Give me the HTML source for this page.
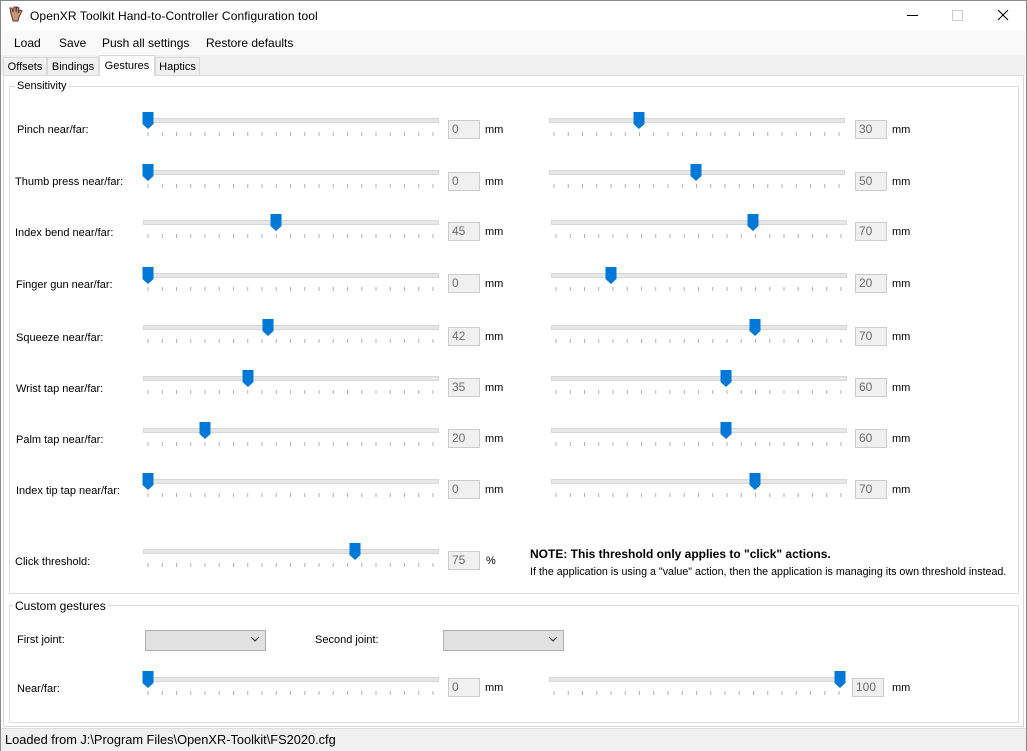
<!DOCTYPE html>
<html><head><meta charset="utf-8"><style>
body{margin:0;width:1027px;height:751px;overflow:hidden;background:#fff;font-family:"Liberation Sans",sans-serif;font-size:12px;color:#000;position:relative}
.a{position:absolute;white-space:nowrap}
.l{position:absolute;white-space:nowrap;font-size:11px;margin-top:2px}
.tb{position:absolute;width:27px;height:17px;border:1px solid #ccc;background:#f0f0f0;color:#6d6d6d;font-size:12px;line-height:17px;padding-left:3px;box-sizing:content-box}
.tab{position:absolute;top:57px;height:18px;border:1px solid #d9d9d9;border-bottom:none;background:#f0f0f0;font-size:11px;line-height:18px;text-align:center;box-sizing:border-box}
.grp{position:absolute;border:1px solid #dcdcdc}
.dd{position:absolute;width:119px;height:19px;border:1px solid #adadad;background:#e1e1e1}
</style></head><body>
<div class="a" style="left:0;top:0;width:1027px;height:751px;border:1px solid #888;box-sizing:border-box"></div>
<svg class="a" style="left:8px;top:5px" width="16" height="18" viewBox="0 0 16 18"><path d="M3 9 L2 3 L4 3 L5 7 L6 2 L8 2 L8 7 L9 2 L11 3 L10 8 L12 5 L14 6 L11 12 L10 16 L5 16 L4 12 Z" fill="#c9937a" stroke="#5a3b2c" stroke-width="1"/></svg>
<div class="a" style="left:30px;top:9px;font-size:12px;letter-spacing:0.1px">OpenXR Toolkit Hand-to-Controller Configuration tool</div>
<div class="a" style="left:907px;top:15px;width:11px;height:1px;background:#000"></div>
<div class="a" style="left:952px;top:10px;width:9px;height:9px;border:1px solid #ccc"></div>
<svg class="a" style="left:997px;top:9px" width="12" height="12"><path d="M1 1 L11 11 M11 1 L1 11" stroke="#000" stroke-width="1.1"/></svg>
<div class="a" style="left:1px;top:31px;width:1024px;height:24px;background:#f9f9f9"></div>
<div class="a" style="left:14px;top:36px;font-size:12px">Load</div>
<div class="a" style="left:59px;top:36px;font-size:12px">Save</div>
<div class="a" style="left:102px;top:36px;font-size:12px">Push all settings</div>
<div class="a" style="left:206px;top:36px;font-size:12px">Restore defaults</div>
<div class="a" style="left:1px;top:55px;width:1024px;height:20px;background:#f0f0f0"></div>
<div class="tab" style="left:3px;width:44px">Offsets</div>
<div class="tab" style="left:47px;width:52px">Bindings</div>
<div class="tab" style="left:99px;top:55px;height:21px;width:56px;background:#fff;line-height:20px">Gestures</div>
<div class="tab" style="left:155px;width:45px">Haptics</div>
<div class="a" style="left:3px;top:75px;width:1021px;height:652px;border:1px solid #d9d9d9;box-sizing:border-box;background:#fff"></div>
<div class="a" style="left:100px;top:74px;width:54px;height:3px;background:#fff"></div>
<div class="grp" style="left:9px;top:86px;width:1008px;height:506px"></div>
<div class="a" style="left:15px;top:80px;background:#fff;padding:0 2px;font-size:11px">Sensitivity</div>
<div class="grp" style="left:9px;top:605px;width:1008px;height:116px"></div>
<div class="a" style="left:13px;top:599px;background:#fff;padding:0 2px">Custom gestures</div>
<div class="a" style="left:1px;top:728px;width:1025px;height:22px;background:#f0f0f0;border-top:1px solid #ddd"></div>
<div class="a" style="left:5px;top:732px;font-size:12.8px">Loaded from J:\Program Files\OpenXR-Toolkit\FS2020.cfg</div>

<div class="l" style="left:17px;top:122px">Pinch near/far:</div>
<div class="l" style="left:15px;top:174px">Thumb press near/far:</div>
<div class="l" style="left:15px;top:225px">Index bend near/far:</div>
<div class="l" style="left:16px;top:277px">Finger gun near/far:</div>
<div class="l" style="left:16px;top:330px">Squeeze near/far:</div>
<div class="l" style="left:16px;top:381px">Wrist tap near/far:</div>
<div class="l" style="left:16px;top:432px">Palm tap near/far:</div>
<div class="l" style="left:16px;top:483px">Index tip tap near/far:</div>
<div class="l" style="left:15px;top:554px">Click threshold:</div>
<div class="l" style="left:17px;top:632px">First joint:</div>
<div class="l" style="left:315px;top:632px">Second joint:</div>
<div class="l" style="left:17px;top:681px">Near/far:</div>
<div class="dd" style="left:145px;top:630px"></div>
<div class="dd" style="left:443px;top:630px"></div>
<svg class="a" style="left:250px;top:636px" width="10" height="6"><path d="M1 1 L5 5 L9 1" stroke="#333" fill="none"/></svg>
<svg class="a" style="left:548px;top:636px" width="10" height="6"><path d="M1 1 L5 5 L9 1" stroke="#333" fill="none"/></svg>

<div class="a" style="left:530px;top:547px;font-weight:bold;font-size:12px">NOTE: This threshold only applies to "click" actions.</div>
<div class="a" style="left:530px;top:566px;font-size:10.7px">If the application is using a "value" action, then the application is managing its own threshold instead.</div>

<div class="tb" style="left:448px;top:120px">0</div><div class="l" style="left:485px;top:122px">mm</div>
<div class="tb" style="left:855px;top:120px">30</div><div class="l" style="left:892px;top:122px">mm</div>
<div class="tb" style="left:448px;top:172px">0</div><div class="l" style="left:485px;top:174px">mm</div>
<div class="tb" style="left:855px;top:172px">50</div><div class="l" style="left:892px;top:174px">mm</div>
<div class="tb" style="left:448px;top:222px">45</div><div class="l" style="left:485px;top:224px">mm</div>
<div class="tb" style="left:855px;top:222px">70</div><div class="l" style="left:892px;top:224px">mm</div>
<div class="tb" style="left:448px;top:274px">0</div><div class="l" style="left:485px;top:276px">mm</div>
<div class="tb" style="left:855px;top:274px">20</div><div class="l" style="left:892px;top:276px">mm</div>
<div class="tb" style="left:448px;top:327px">42</div><div class="l" style="left:485px;top:329px">mm</div>
<div class="tb" style="left:855px;top:327px">70</div><div class="l" style="left:892px;top:329px">mm</div>
<div class="tb" style="left:448px;top:378px">35</div><div class="l" style="left:485px;top:380px">mm</div>
<div class="tb" style="left:855px;top:378px">60</div><div class="l" style="left:892px;top:380px">mm</div>
<div class="tb" style="left:448px;top:429px">20</div><div class="l" style="left:485px;top:431px">mm</div>
<div class="tb" style="left:855px;top:429px">60</div><div class="l" style="left:892px;top:431px">mm</div>
<div class="tb" style="left:448px;top:480px">0</div><div class="l" style="left:485px;top:482px">mm</div>
<div class="tb" style="left:855px;top:480px">70</div><div class="l" style="left:892px;top:482px">mm</div>
<div class="tb" style="left:448px;top:551px">75</div><div class="l" style="left:486px;top:553px">%</div>
<div class="tb" style="left:448px;top:678px">0</div><div class="l" style="left:485px;top:680px">mm</div>
<div class="tb" style="left:852px;top:678px">100</div><div class="l" style="left:892px;top:680px">mm</div>

<svg class="a" style="left:0;top:0" width="1027" height="751">
<defs>
<pattern id="tk" patternUnits="userSpaceOnUse" x="4.5" y="0" width="14.25" height="4"><rect x="0" y="0" width="1" height="4" fill="#b0b0b0"/></pattern>
<g id="s"><rect x="0.5" y="0.5" width="295" height="4" fill="#e7e7e7" stroke="#d6d6d6"/><rect x="4.5" y="14" width="287" height="4" fill="url(#tk)"/></g>
<path id="th" d="M-5.5 0 H5.5 V12 L0 17 L-5.5 12 Z" fill="#0078d7"/>
</defs>
<g transform="translate(143,118)"><use href="#s"/><use href="#th" x="5" y="-6"/></g>
<g transform="translate(549,118)"><use href="#s"/><use href="#th" x="90" y="-6"/></g>
<g transform="translate(143,170)"><use href="#s"/><use href="#th" x="5" y="-6"/></g>
<g transform="translate(549,170)"><use href="#s"/><use href="#th" x="147" y="-6"/></g>
<g transform="translate(143,220)"><use href="#s"/><use href="#th" x="133" y="-6"/></g>
<g transform="translate(551,220)"><use href="#s"/><use href="#th" x="202" y="-6"/></g>
<g transform="translate(143,273)"><use href="#s"/><use href="#th" x="5" y="-6"/></g>
<g transform="translate(551,273)"><use href="#s"/><use href="#th" x="60" y="-6"/></g>
<g transform="translate(143,325)"><use href="#s"/><use href="#th" x="125" y="-6"/></g>
<g transform="translate(551,325)"><use href="#s"/><use href="#th" x="204" y="-6"/></g>
<g transform="translate(143,376)"><use href="#s"/><use href="#th" x="105" y="-6"/></g>
<g transform="translate(551,376)"><use href="#s"/><use href="#th" x="175" y="-6"/></g>
<g transform="translate(143,428)"><use href="#s"/><use href="#th" x="62" y="-6"/></g>
<g transform="translate(551,428)"><use href="#s"/><use href="#th" x="175" y="-6"/></g>
<g transform="translate(143,479)"><use href="#s"/><use href="#th" x="5" y="-6"/></g>
<g transform="translate(551,479)"><use href="#s"/><use href="#th" x="204" y="-6"/></g>
<g transform="translate(143,549)"><use href="#s"/><use href="#th" x="212" y="-6"/></g>
<g transform="translate(143,677)"><use href="#s"/><use href="#th" x="5" y="-6"/></g>
<g transform="translate(549,677)"><use href="#s"/><use href="#th" x="291" y="-6"/></g>
</svg>
</body></html>
